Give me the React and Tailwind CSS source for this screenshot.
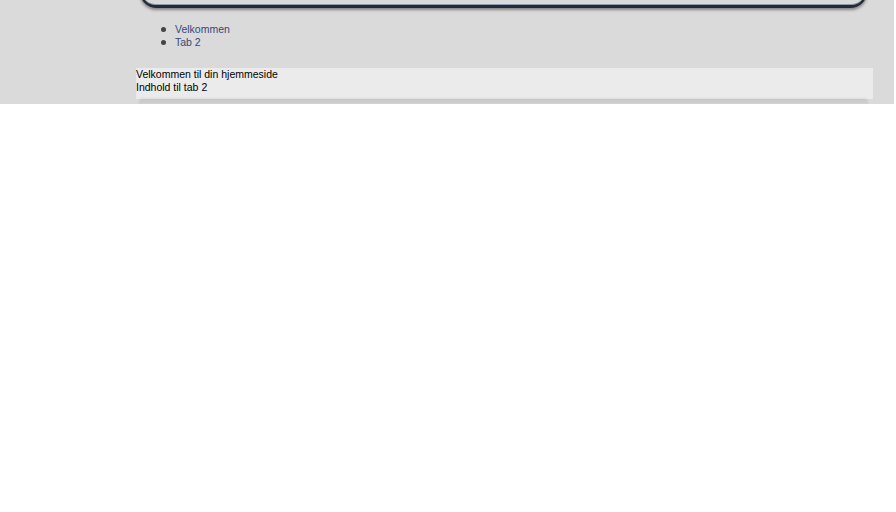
const tabs = ["Velkommen", "Tab 2"];

export default function App() {
  return (
    <div className="w-[894px] h-[104px] bg-[#dadada] overflow-hidden" style={{ fontFamily: '"Liberation Sans", Arial, sans-serif' }}>
      <div className="ml-[136px] w-[737px]">
        <div className="ml-[4px] mr-[6px] -mt-[22px] h-[30px] rounded-b-[16px] border-2 border-b-[3px] border-[#262b33] bg-gradient-to-b from-[#c9ccd0] to-[#dcdcdc] shadow-[0_2px_3px_rgba(0,0,0,0.4),inset_0_-1px_0_#8a9bb0]" />
        <ul className="mt-[15px] pl-[25px] text-[10.5px] leading-[13px] text-[#34497a]">
          {tabs.map((t) => (
            <li key={t} className="flex items-center">
              <span className="w-[5px] h-[5px] rounded-full bg-[#444] mr-[9px]" />
              {t}
            </li>
          ))}
        </ul>
        <div className="mt-[19px] bg-[#ebebeb] h-[31px] text-[10.5px] leading-[13px] text-black">
          <div>Velkommen til din hjemmeside</div>
          <div>Indhold til tab 2</div>
        </div>
        <div className="ml-[4px] mr-[6px] mt-[1px] h-[6px] bg-gradient-to-b from-[#c8c8c8] to-[#d6d6d6] shadow-[0_-1px_3px_rgba(0,0,0,0.12)]" />
      </div>
    </div>
  );
}
